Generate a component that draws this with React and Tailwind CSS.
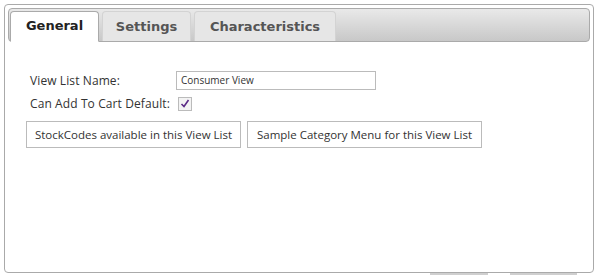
export default function App() {
  const tabFont = { fontFamily: '"DejaVu Sans", Verdana, sans-serif' };
  const bodyFont = { fontFamily: '"Open Sans", "Noto Sans", sans-serif' };
  return (
    <div className="w-[597px] h-[275px] bg-white relative overflow-hidden">
      <div className="absolute left-[430px] top-[273px] w-[58px] h-[2px] bg-[#cfcfcf]" />
      <div className="absolute left-[510px] top-[273px] w-[67px] h-[2px] bg-[#cfcfcf]" />
      <div className="relative ml-[4px] mt-[4px] w-[590px] h-[269px] border border-[#aaaaaa] rounded-[4px] p-[3px] bg-white flex flex-col">
        <div className="h-[34px] border border-[#aaaaaa] rounded-[4px] bg-gradient-to-b from-[#e9e9e9] to-[#c8c8c8] flex items-end pl-[1px] gap-[3px]">
          <div
            className="h-[31px] -mb-px w-[89px] bg-white border border-[#aaaaaa] border-b-white rounded-t-[4px] flex items-center justify-center text-[13px] font-bold text-[#222222] pb-[1px]"
            style={tabFont}
          >
            General
          </div>
          <div
            className="h-[30px] w-[89px] bg-[#e6e6e6] border border-[#d3d3d3] border-b-0 rounded-t-[4px] flex items-center justify-center text-[13px] font-bold text-[#555555]"
            style={tabFont}
          >
            Settings
          </div>
          <div
            className="h-[30px] w-[142px] bg-[#e6e6e6] border border-[#d3d3d3] border-b-0 rounded-t-[4px] flex items-center justify-center text-[13px] font-bold text-[#555555]"
            style={tabFont}
          >
            Characteristics
          </div>
        </div>
        <div className="flex flex-col pl-[18px] pt-[29px] text-[#333333]" style={bodyFont}>
          <div className="flex items-center h-[19px]">
            <span className="w-[150px] pl-[4px] text-[12px] tracking-[0.1px]">View List Name:</span>
            <div className="w-[200px] h-[19px] border border-[#bbbbbb] flex items-center pl-[4px] text-[10px] text-[#333333]">
              Consumer View
            </div>
          </div>
          <div className="flex items-center h-[19px] mt-[4px]">
            <span className="pl-[4px] text-[12px] tracking-[0.1px]">Can Add To Cart Default:</span>
            <div className="ml-[8px] w-[14px] h-[14px] border border-[#bbbbbb] bg-[#f3f3f3] flex items-center justify-center">
              <svg width="10" height="9" viewBox="0 0 10 9">
                <path d="M1.5 5 L4 7.5 L8.5 1" fill="none" stroke="#5b2a86" strokeWidth="1.6" />
              </svg>
            </div>
          </div>
          <div className="flex mt-[8px] gap-[6px]">
            <div className="h-[27px] w-[215px] border border-[#bbbbbb] flex items-center justify-center text-[11.5px] text-[#333333]">
              StockCodes available in this View List
            </div>
            <div className="h-[27px] w-[235px] border border-[#bbbbbb] flex items-center justify-center text-[11.5px] text-[#333333]">
              Sample Category Menu for this View List
            </div>
          </div>
        </div>
      </div>
    </div>
  );
}
